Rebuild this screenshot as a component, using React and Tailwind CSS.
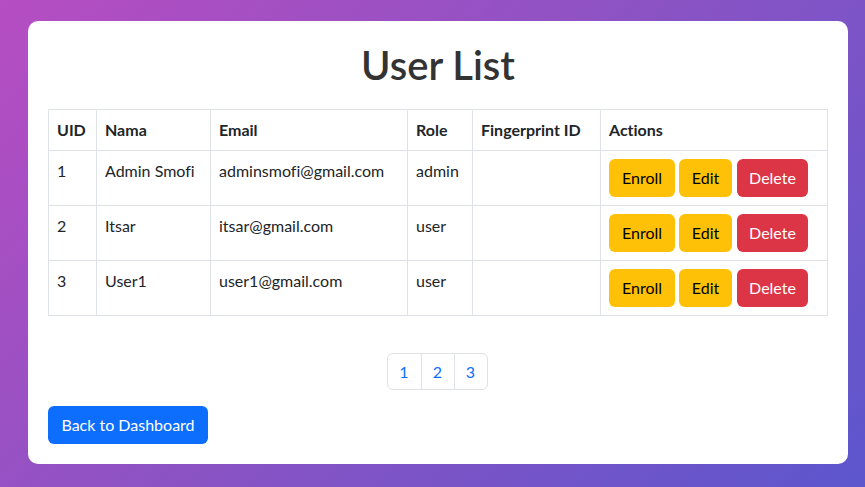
import React from "react";

const users = [
  { uid: 1, nama: "Admin Smofi", email: "adminsmofi@gmail.com", role: "admin" },
  { uid: 2, nama: "Itsar", email: "itsar@gmail.com", role: "user" },
  { uid: 3, nama: "User1", email: "user1@gmail.com", role: "user" },
];

const cell = "border border-[#dee2e6] px-[8px] py-[8px] align-top whitespace-nowrap overflow-hidden";

export default function App() {
  return (
    <div
      className="h-[487px] w-[865px] overflow-hidden bg-[linear-gradient(135deg,#b64dc2_0%,#8a53c4_50%,#5d56cd_100%)] pt-[21px] pl-[28px] text-[#212529] [font-variant-ligatures:none]"
      style={{ fontFamily: 'Lato, "Noto Sans", sans-serif' }}
    >
      <div className="w-[820px] h-[443px] rounded-[10px] bg-white p-[20px]">
        <h1 className="m-0 mb-[20px] text-center text-[40px] leading-[48px] font-semibold text-[#333]">
          User List
        </h1>
        <table className="w-[780px] table-fixed border-collapse text-[16px] leading-[24px]">
          <colgroup>
            <col className="w-[48px]" />
            <col className="w-[114px]" />
            <col className="w-[197px]" />
            <col className="w-[65px]" />
            <col className="w-[128px]" />
            <col />
          </colgroup>
          <thead>
            <tr className="h-[41px]">
              <th className={cell + " text-left font-bold"}>UID</th>
              <th className={cell + " text-left font-bold"}>Nama</th>
              <th className={cell + " text-left font-bold"}>Email</th>
              <th className={cell + " text-left font-bold"}>Role</th>
              <th className={cell + " text-left font-bold"}>Fingerprint ID</th>
              <th className={cell + " text-left font-bold"}>Actions</th>
            </tr>
          </thead>
          <tbody>
            {users.map((u) => (
              <tr key={u.uid} className="h-[55px]">
                <td className={cell}>{u.uid}</td>
                <td className={cell}>{u.nama}</td>
                <td className={cell}>{u.email}</td>
                <td className={cell}>{u.role}</td>
                <td className={cell}></td>
                <td className={cell}>
                  <div className="flex gap-[4px]">
                    <button className="h-[38px] w-[66px] rounded-[6px] bg-[#ffc107] text-[16px] text-black">Enroll</button>
                    <button className="h-[38px] w-[53px] rounded-[6px] bg-[#ffc107] text-[16px] text-black">Edit</button>
                    <button className="ml-[1px] h-[38px] w-[71px] rounded-[6px] bg-[#dc3545] text-[16px] text-white">Delete</button>
                  </div>
                </td>
              </tr>
            ))}
          </tbody>
        </table>
        <div className="mt-[37px] flex justify-center">
          <div className="ml-[-2px] flex h-[37px] rounded-[6px] border border-[#dee2e6] text-[16px] text-[#0d6efd]">
            <span className="flex w-[33px] items-center justify-center">1</span>
            <span className="flex w-[33px] items-center justify-center border-l border-[#dee2e6]">2</span>
            <span className="flex w-[33px] items-center justify-center border-l border-[#dee2e6]">3</span>
          </div>
        </div>
        <button className="mt-[16px] block h-[38px] w-[160px] rounded-[6px] bg-[#0d6efd] text-[16px] text-white">
          Back to Dashboard
        </button>
      </div>
    </div>
  );
}
